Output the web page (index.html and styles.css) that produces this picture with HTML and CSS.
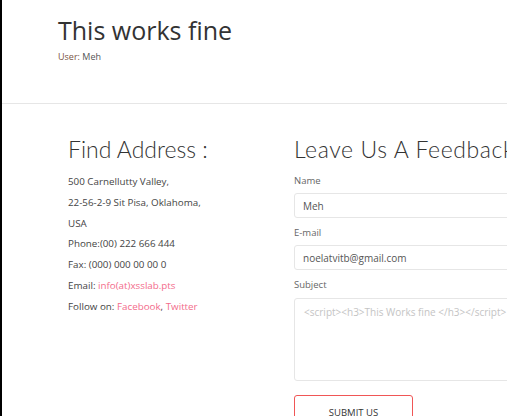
FILE: index.html
```html
<!DOCTYPE html>
<html>
<head>
<meta charset="utf-8">
<link rel="stylesheet" href="styles.css">
</head>
<body>
<div class="page">
  <header class="top">
    <h1 class="title">This works fine</h1>
    <p class="user"><span class="user-key">User:</span> Meh</p>
  </header>
  <div class="sep"></div>
  <main class="content">
    <section class="address">
      <h2 class="heading">Find Address :</h2>
      <p class="line">500 Carnellutty Valley,</p>
      <p class="line">22-56-2-9 Sit Pisa, Oklahoma,</p>
      <p class="line">USA</p>
      <p class="line">Phone:(00) 222 666 444</p>
      <p class="line">Fax: (000) 000 00 00 0</p>
      <p class="line">Email: <a class="link" href="#">info(at)xsslab.pts</a></p>
      <p class="line">Follow on: <a class="link" href="#">Facebook</a>, <a class="link" href="#">Twitter</a></p>
    </section>
    <section class="feedback">
      <h2 class="heading heading-wide">Leave Us A Feedback</h2>
      <form class="form">
        <label class="label">Name</label>
        <input class="field" type="text" value="Meh">
        <label class="label">E-mail</label>
        <input class="field" type="text" value="noelatvitb@gmail.com">
        <label class="label">Subject</label>
        <textarea class="area" placeholder="<script><h3>This Works fine </h3></script>"></textarea>
        <button class="submit" type="button">SUBMIT US</button>
      </form>
    </section>
  </main>
</div>
</body>
</html>
```
FILE: styles.css
```css
html, body {
  margin: 0;
  padding: 0;
  background: #fff;
  overflow: hidden;
}
body {
  width: 507px;
  height: 416px;
  font-family: "Open Sans", "Liberation Sans", sans-serif;
}
.page {
  border-left: 2px solid #000;
  height: 416px;
  box-sizing: border-box;
  overflow: hidden;
}
.top {
  padding: 14px 0 0 56px;
  height: 89px;
}
.title {
  margin: 0;
  font-size: 25px;
  font-weight: 400;
  line-height: 33px;
  color: #333;
}
.user {
  margin: 4px 0 0;
  font-size: 9px;
  line-height: 12px;
  color: #555;
}
.user-key {
  color: #7a5443;
}
.sep {
  border-top: 1px solid #e6e6e6;
}
.content {
  display: flex;
  padding: 30px 0 0 66px;
}
.address {
  width: 226px;
  flex: none;
}
.feedback {
  flex: none;
  width: 300px;
}
.heading {
  margin: 0 0 8px;
  font-family: "Lato", "Open Sans", sans-serif;
  font-weight: 300;
  font-size: 23px;
  line-height: 30px;
  color: #333;
  white-space: nowrap;
}
.heading-wide {
  margin-bottom: 10px;
  letter-spacing: 0.6px;
}
.line {
  margin: 0;
  font-size: 9.8px;
  line-height: 20.8px;
  color: #444;
}
.link {
  color: #f36b8b;
  text-decoration: none;
}
.form {
  display: flex;
  flex-direction: column;
  align-items: flex-start;
}
.label {
  font-size: 9.5px;
  line-height: 14px;
  color: #666;
  margin-bottom: 5px;
}
.field {
  width: 260px;
  height: 25px;
  box-sizing: border-box;
  border: 1px solid #e6e6e6;
  border-radius: 3px;
  padding: 0 8px;
  font-family: "Open Sans", sans-serif;
  font-size: 10px;
  color: #555;
  margin: 0 0 8px;
  outline: none;
}
.area {
  width: 260px;
  height: 83px;
  box-sizing: border-box;
  border: 1px solid #e6e6e6;
  border-radius: 3px;
  padding: 6px 9px;
  font-family: "Open Sans", sans-serif;
  font-size: 10px;
  resize: none;
  margin: 1px 0 14px;
  outline: none;
}
.area::placeholder {
  color: #c4c4c4;
}
.submit {
  width: 119px;
  height: 36px;
  border: 1px solid #f05656;
  border-radius: 3px;
  background: #fff;
  font-family: "Open Sans", sans-serif;
  font-size: 9.5px;
  color: #333;
  padding: 0 0 2px;
}
```
